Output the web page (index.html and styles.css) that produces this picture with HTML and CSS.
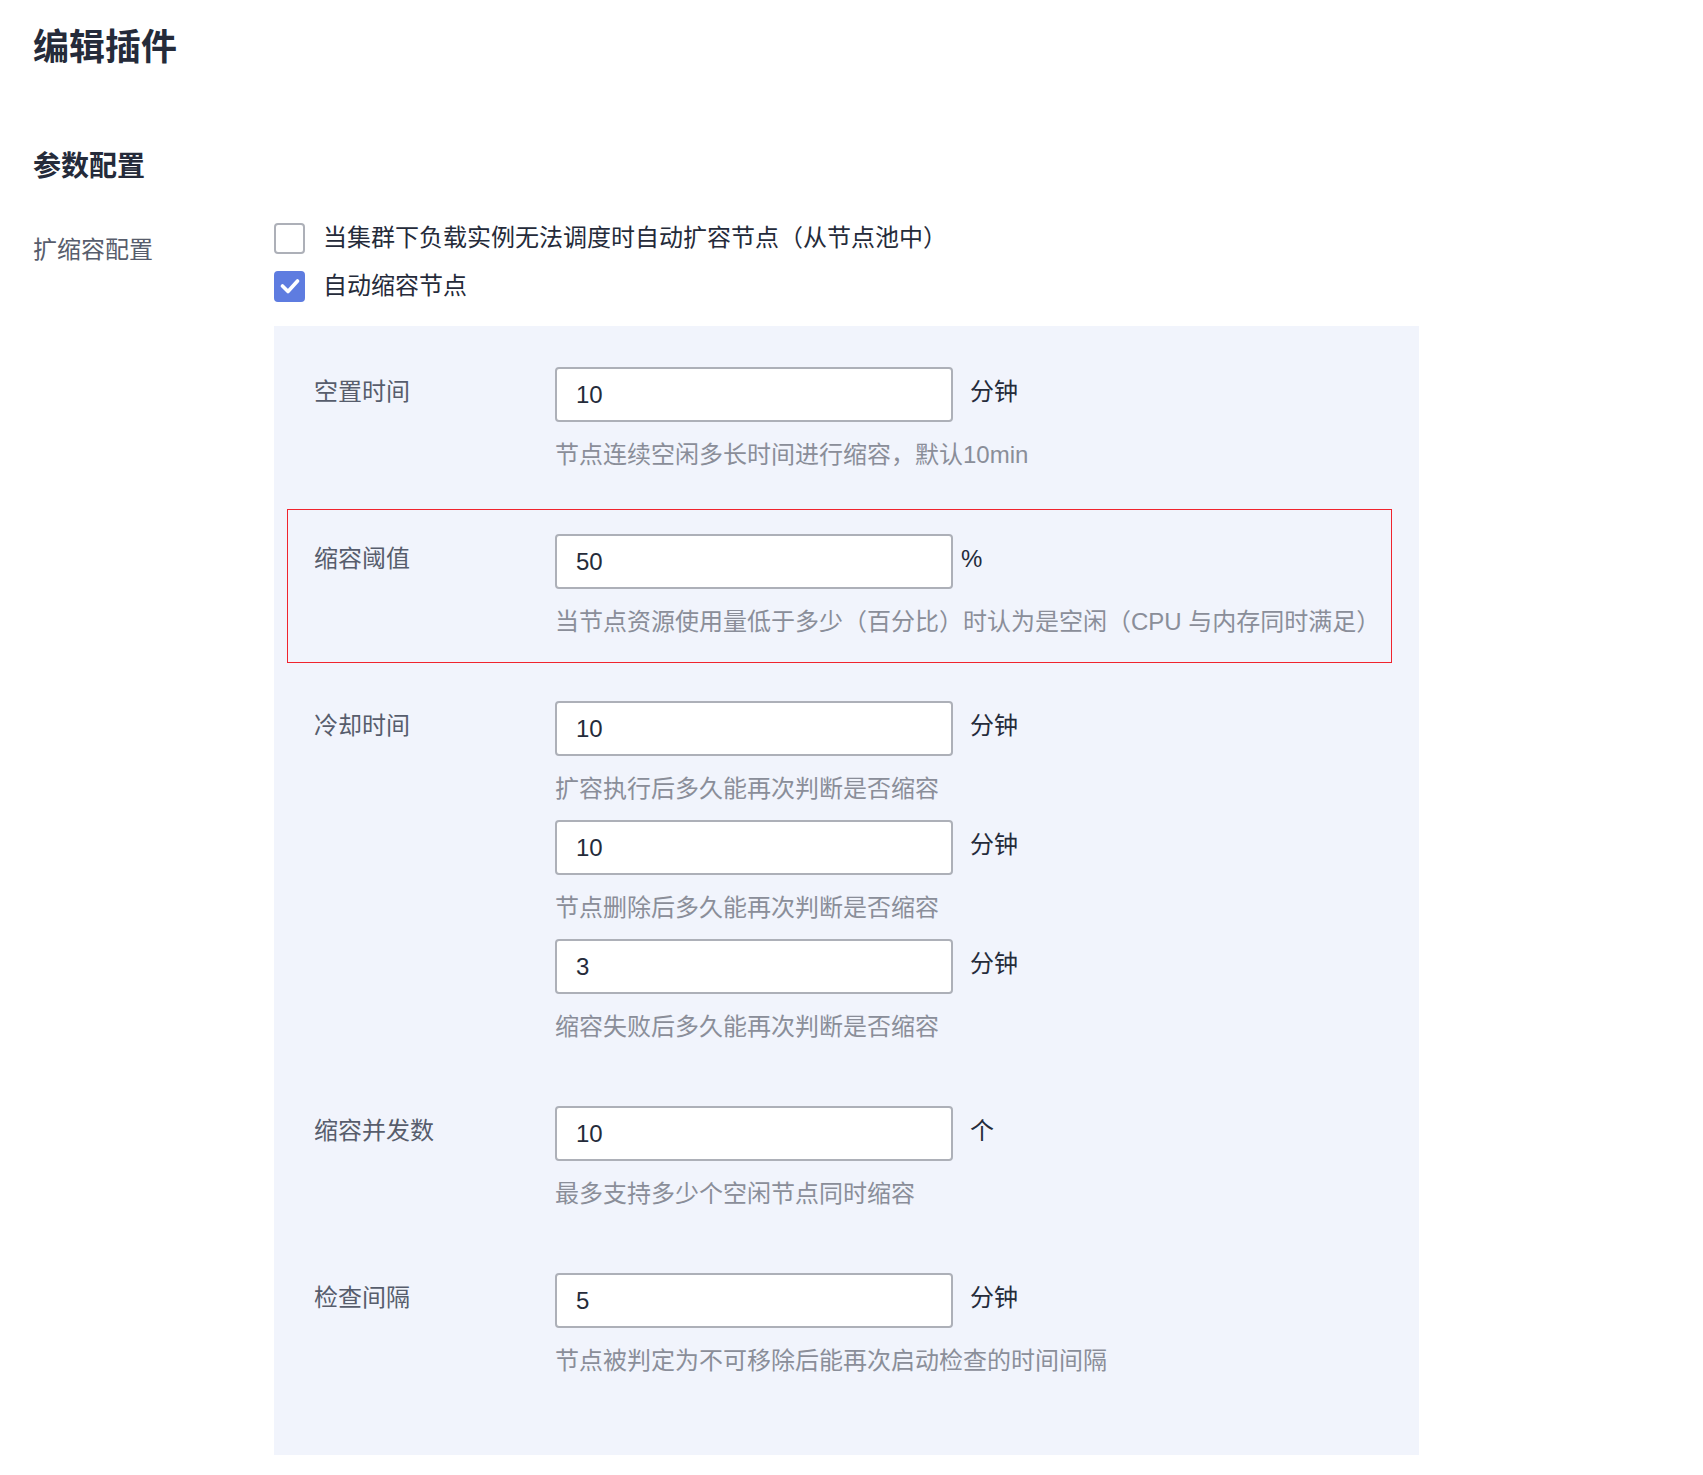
FILE: index.html
```html
<!DOCTYPE html>
<html lang="zh-CN">
<head>
    <meta charset="UTF-8">
    <meta name="viewport" content="width=device-width, initial-scale=1.0">
    <title>编辑插件</title>
    <link rel="stylesheet" href="styles.css">
</head>
<body>
    <div class="page">
        <h1 class="page-title">编辑插件</h1>
        <h2 class="section-title">参数配置</h2>

        <div class="form-row">
            <div class="form-label">扩缩容配置</div>
            <div class="form-control">
                <label class="check">
                    <span class="check-box"></span>
                    <span>当集群下负载实例无法调度时自动扩容节点（从节点池中）</span>
                </label>
                <label class="check checked">
                    <span class="check-box">
                        <svg width="20" height="16" viewBox="0 0 20 16"><polyline points="2.5,8 8,13.5 17.5,3" fill="none" stroke="#fff" stroke-width="3.6" stroke-linecap="round" stroke-linejoin="round"/></svg>
                    </span>
                    <span>自动缩容节点</span>
                </label>

                <div class="sub-panel">
                    <div class="sub-item">
                        <div class="sub-label">空置时间</div>
                        <div class="sub-fields">
                            <div class="field">
                                <div class="field-line">
                                    <input class="num-input" type="text" value="10">
                                    <span class="unit">分钟</span>
                                </div>
                                <div class="hint">节点连续空闲多长时间进行缩容，默认10min</div>
                            </div>
                        </div>
                    </div>

                    <div class="sub-item marked">
                        <div class="sub-label">缩容阈值</div>
                        <div class="sub-fields">
                            <div class="field">
                                <div class="field-line">
                                    <input class="num-input" type="text" value="50">
                                    <span class="unit unit-tight">%</span>
                                </div>
                                <div class="hint">当节点资源使用量低于多少（百分比）时认为是空闲（CPU 与内存同时满足）</div>
                            </div>
                        </div>
                    </div>

                    <div class="sub-item">
                        <div class="sub-label">冷却时间</div>
                        <div class="sub-fields">
                            <div class="field">
                                <div class="field-line">
                                    <input class="num-input" type="text" value="10">
                                    <span class="unit">分钟</span>
                                </div>
                                <div class="hint">扩容执行后多久能再次判断是否缩容</div>
                            </div>
                            <div class="field">
                                <div class="field-line">
                                    <input class="num-input" type="text" value="10">
                                    <span class="unit">分钟</span>
                                </div>
                                <div class="hint">节点删除后多久能再次判断是否缩容</div>
                            </div>
                            <div class="field">
                                <div class="field-line">
                                    <input class="num-input" type="text" value="3">
                                    <span class="unit">分钟</span>
                                </div>
                                <div class="hint">缩容失败后多久能再次判断是否缩容</div>
                            </div>
                        </div>
                    </div>

                    <div class="sub-item">
                        <div class="sub-label">缩容并发数</div>
                        <div class="sub-fields">
                            <div class="field">
                                <div class="field-line">
                                    <input class="num-input" type="text" value="10">
                                    <span class="unit">个</span>
                                </div>
                                <div class="hint">最多支持多少个空闲节点同时缩容</div>
                            </div>
                        </div>
                    </div>

                    <div class="sub-item">
                        <div class="sub-label">检查间隔</div>
                        <div class="sub-fields">
                            <div class="field">
                                <div class="field-line">
                                    <input class="num-input" type="text" value="5">
                                    <span class="unit">分钟</span>
                                </div>
                                <div class="hint">节点被判定为不可移除后能再次启动检查的时间间隔</div>
                            </div>
                        </div>
                    </div>
                </div>
            </div>
        </div>
    </div>
</body>
</html>
```

FILE: styles.css
```css
body {
    margin: 0;
    background-color: #fff;
    color: #252b3a;
    font-family: "Liberation Sans", "Noto Sans CJK SC", sans-serif;
    font-size: 24px;
}
.page {
    padding: 24px 33px 0;
}
.page-title {
    margin: 0;
    font-size: 36px;
    line-height: 48px;
    font-weight: bold;
}
.section-title {
    margin: 75px 0 0;
    font-size: 28px;
    line-height: 40px;
    font-weight: bold;
}
.form-row {
    display: flex;
    margin-top: 31px;
}
.form-label {
    width: 241px;
    flex-shrink: 0;
    padding-top: 12px;
    line-height: 40px;
    color: #575d6c;
}
.form-control {
    display: flex;
    flex-direction: column;
    gap: 8px;
}
.check {
    display: flex;
    align-items: center;
    height: 40px;
    line-height: 40px;
    cursor: pointer;
}
.check-box {
    box-sizing: border-box;
    width: 31px;
    height: 31px;
    margin-right: 18px;
    border: 2px solid #adb0b8;
    border-radius: 4px;
    background-color: #fff;
    display: flex;
    align-items: center;
    justify-content: center;
}
.check.checked .check-box {
    background-color: #5e7ce0;
    border-color: #5e7ce0;
}
.sub-panel {
    width: 1145px;
    margin-top: 12px;
    padding: 16px 0 40px;
    background-color: #f1f4fc;
}
.sub-item {
    display: flex;
    margin: 0 27px 13px 13px;
    padding: 24px 0 24px 26px;
    border: 1px solid transparent;
}
.sub-item.marked {
    border-color: #f0242e;
}
.sub-label {
    width: 241px;
    flex-shrink: 0;
    line-height: 50px;
    color: #575d6c;
}
.field + .field {
    margin-top: 15px;
}
.field-line {
    display: flex;
    align-items: flex-start;
}
.num-input {
    box-sizing: border-box;
    width: 398px;
    height: 55px;
    padding: 0 19px;
    border: 2px solid #adb0b8;
    border-radius: 4px;
    background-color: #fff;
    color: #252b3a;
    font: inherit;
    font-size: 24px;
    outline: none;
}
.unit {
    margin-left: 17px;
    line-height: 50px;
    color: #252b3a;
}
.unit-tight {
    margin-left: 8px;
}
.hint {
    margin-top: 17px;
    line-height: 32px;
    color: #8a8e99;
    white-space: nowrap;
}
```
